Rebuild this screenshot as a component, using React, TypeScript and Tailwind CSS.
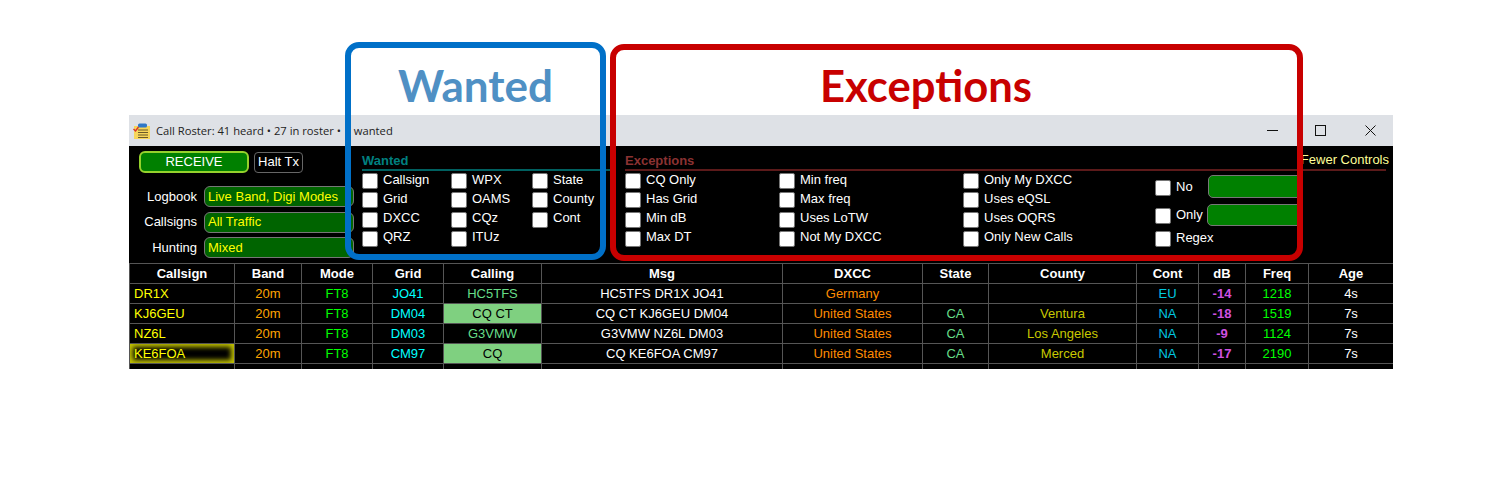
import React from 'react';

const wantedCols = [
  ['Callsign', 'Grid', 'DXCC', 'QRZ'],
  ['WPX', 'OAMS', 'CQz', 'ITUz'],
  ['State', 'County', 'Cont'],
];

const exceptionCols = [
  ['CQ Only', 'Has Grid', 'Min dB', 'Max DT'],
  ['Min freq', 'Max freq', 'Uses LoTW', 'Not My DXCC'],
  ['Only My DXCC', 'Uses eQSL', 'Uses OQRS', 'Only New Calls'],
];

const columns = [
  { name: 'Callsign', width: 105 },
  { name: 'Band', width: 67 },
  { name: 'Mode', width: 71 },
  { name: 'Grid', width: 71 },
  { name: 'Calling', width: 98 },
  { name: 'Msg', width: 241 },
  { name: 'DXCC', width: 140 },
  { name: 'State', width: 66 },
  { name: 'County', width: 148 },
  { name: 'Cont', width: 62 },
  { name: 'dB', width: 47 },
  { name: 'Freq', width: 63 },
  { name: 'Age', width: 85 },
];

const rows = [
  { call: 'DR1X', grid: 'JO41', calling: 'HC5TFS', msg: 'HC5TFS DR1X JO41', dxcc: 'Germany', state: '', county: '', cont: 'EU', db: '-14', freq: '1218', age: '4s' },
  { call: 'KJ6GEU', grid: 'DM04', calling: 'CQ CT', msg: 'CQ CT KJ6GEU DM04', dxcc: 'United States', state: 'CA', county: 'Ventura', cont: 'NA', db: '-18', freq: '1519', age: '7s', hit: true },
  { call: 'NZ6L', grid: 'DM03', calling: 'G3VMW', msg: 'G3VMW NZ6L DM03', dxcc: 'United States', state: 'CA', county: 'Los Angeles', cont: 'NA', db: '-9', freq: '1124', age: '7s' },
  { call: 'KE6FOA', grid: 'CM97', calling: 'CQ', msg: 'CQ KE6FOA CM97', dxcc: 'United States', state: 'CA', county: 'Merced', cont: 'NA', db: '-17', freq: '2190', age: '7s', hit: true, glow: true },
  { call: 'W0SS', grid: 'EM29', calling: 'OE1FJV', msg: 'OE1FJV W0SS EM29', dxcc: 'United States', state: 'KS', county: 'Idaho', cont: 'NA', db: '-11', freq: '757', age: '7s' },
];

// labels sit a little above the box centre, more so in the lower rows
const labelLift = ['mb-[2px]', 'mb-[2px]', 'mb-[4px]', 'mb-[4px]'];

const Check: React.FC<{ label: string; row?: number }> = ({ label, row = 0 }) => (
  <div className="flex items-center h-[16px]">
    <span className="w-[16px] h-[16px] bg-white border border-[#767676] rounded-[2px] shrink-0" />
    <span className={`ml-[5px] text-white whitespace-nowrap ${labelLift[row]}`}>{label}</span>
  </div>
);

const CheckCol: React.FC<{ items: string[]; width: number }> = ({ items, width }) => (
  <div className="grid grid-rows-[16px_16px_16px_16px] gap-y-[3.3px] shrink-0" style={{ width }}>
    {items.map((item, i) => (
      <Check key={item} label={item} row={i} />
    ))}
  </div>
);

const Select: React.FC<{ label: string; value: string }> = ({ label, value }) => (
  <div className="flex items-center h-[21px]">
    <span className="w-[58px] text-right text-white">{label}</span>
    <div className="ml-[7px] w-[150px] h-[21px] flex items-center pl-[3px] bg-[#006400] border border-[#777] rounded-[6px] text-[#ffff00] whitespace-nowrap">
      {value}
    </div>
  </div>
);

const RosterIcon = () => (
  <svg width="17" height="16" viewBox="0 0 17 16" className="shrink-0">
    <rect x="1" y="3" width="16" height="13" fill="#f7d65a" />
    <rect x="5" y="0.5" width="9" height="4" rx="1.5" fill="#2f78c8" />
    <path d="M5 7h10M5 9.5h10M5 12h10M5 14.5h10" stroke="#6b5a2a" strokeWidth="1.2" />
    <path d="M0.5 6l2 2 3-4" stroke="#d8342a" strokeWidth="1.4" fill="none" />
  </svg>
);

const App: React.FC = () => {
  return (
    <div className="relative w-[1500px] h-[500px] bg-white pt-[115px] overflow-hidden font-['Liberation_Sans',Arial,sans-serif] text-[13px] leading-[16px]">
      <div className="ml-[129px] w-[1264px] h-[254px] bg-black overflow-hidden">
        <div className="h-[31px] bg-[#dee1e6] flex items-center pl-[4px] font-['Open_Sans',sans-serif] text-[11.2px] text-[#222]">
          <RosterIcon />
          <span className="ml-[6px] whitespace-nowrap">Call Roster: 41 heard • 27 in roster •</span>
          <span className="ml-[13px]">wanted</span>
          <div className="ml-auto flex items-start gap-[36px] h-full pt-[10px] pr-[16px]">
            <svg width="12" height="12" viewBox="0 0 12 12">
              <path d="M0 5.5h11" stroke="#111" strokeWidth="1" />
            </svg>
            <svg width="12" height="12" viewBox="0 0 12 12">
              <rect x="0.5" y="0.5" width="10" height="10" fill="none" stroke="#111" strokeWidth="1" />
            </svg>
            <svg width="12" height="12" viewBox="0 0 12 12" className="ml-[2px]">
              <path d="M0.5 0.5l10 10M10.5 0.5l-10 10" stroke="#111" strokeWidth="1" />
            </svg>
          </div>
        </div>

        <div className="flex h-[117px]">
          <div className="w-[233px] shrink-0 pl-[10px] pt-[5px]">
            <div className="flex items-center gap-[5px]">
              <div className="w-[110px] h-[22px] flex items-center justify-center bg-[#008000] border-2 border-[#94d12c] rounded-[6px] text-white">
                RECEIVE
              </div>
              <div className="w-[49px] h-[21px] flex items-center justify-center bg-black border border-[#666] rounded-[4px] text-white">
                Halt Tx
              </div>
            </div>
            <div className="mt-[13px] flex flex-col gap-[4.5px]">
              <Select label="Logbook" value="Live Band, Digi Modes" />
              <Select label="Callsigns" value="All Traffic" />
              <Select label="Hunting" value="Mixed" />
            </div>
          </div>

          <div className="w-[248px] shrink-0 pt-[7px]">
            <div className="h-[18px] border-b-2 border-[#006060] font-bold text-[#008080]">Wanted</div>
            <div className="flex pt-[2px]">
              <CheckCol items={wantedCols[0]} width={89} />
              <CheckCol items={wantedCols[1]} width={81} />
              <CheckCol items={wantedCols[2]} width={78} />
            </div>
          </div>

          <div className="ml-[15px] w-[761px] shrink-0 relative pt-[7px]">
            <div className="h-[18px] border-b-2 border-[#5c1a1a] font-bold text-[#8b3232]">Exceptions</div>
            <div className="flex pt-[2px]">
              <CheckCol items={exceptionCols[0]} width={154} />
              <CheckCol items={exceptionCols[1]} width={184} />
              <CheckCol items={exceptionCols[2]} width={192} />
              <div className="w-[160px] shrink-0 flex flex-col pt-[2px]">
                <div className="flex items-start">
                  <div className="w-[53px] mt-[5px]"><Check label="No" /></div>
                  <div className="w-[95px] h-[23px] bg-[#008000] border border-[#777] rounded-[5px]" />
                </div>
                <div className="flex items-start mt-[6px]">
                  <div className="w-[52px] mt-[4px]"><Check label="Only" /></div>
                  <div className="w-[96px] h-[22px] bg-[#008000] border border-[#777] rounded-[5px]" />
                </div>
                <div className="mt-[5px]"><Check label="Regex" /></div>
              </div>
            </div>
            <span className="absolute right-[-3px] top-[6px] text-[#ffff99] whitespace-nowrap">Fewer Controls</span>
          </div>
        </div>

        <table className="table-fixed border-collapse w-[1264px] text-center leading-[15px]">
          <colgroup>
            {columns.map((c) => (
              <col key={c.name} style={{ width: c.width }} />
            ))}
          </colgroup>
          <thead>
            <tr className="h-[20px]">
              {columns.map((c) => (
                <th key={c.name} className="border border-[#555] p-0 font-bold text-white">{c.name}</th>
              ))}
            </tr>
          </thead>
          <tbody>
            {rows.map((r) => (
              <tr key={r.call} className="h-[20px]">
                <td className={`border border-[#555] p-0 pl-[4px] text-left text-[#ffff00] ${r.glow ? 'shadow-[inset_0_0_5px_3px_#c4c400]' : ''}`}>{r.call}</td>
                <td className="border border-[#555] p-0 text-[#ffa500]">20m</td>
                <td className="border border-[#555] p-0 text-[#00ff00]">FT8</td>
                <td className="border border-[#555] p-0 text-[#00ffff]">{r.grid}</td>
                <td className={`border border-[#555] p-0 ${r.hit ? 'bg-[#7fd080] text-black' : 'text-[#66dd88]'}`}>{r.calling}</td>
                <td className="border border-[#555] p-0 text-white">{r.msg}</td>
                <td className="border border-[#555] p-0 text-[#ff8c00]">{r.dxcc}</td>
                <td className="border border-[#555] p-0 text-[#66dd88]">{r.state}</td>
                <td className="border border-[#555] p-0 text-[#c8c800]">{r.county}</td>
                <td className="border border-[#555] p-0 text-[#00c8e0]">{r.cont}</td>
                <td className="border border-[#555] p-0 font-bold text-[#d050e0]">{r.db}</td>
                <td className="border border-[#555] p-0 text-[#00ff00]">{r.freq}</td>
                <td className="border border-[#555] p-0 text-white">{r.age}</td>
              </tr>
            ))}
          </tbody>
        </table>
      </div>

      {/* annotation frames drawn over the screenshot */}
      <div className="absolute left-[345px] top-[42px] w-[261px] h-[218px] border-[6px] border-[#0070c8] rounded-[14px] flex justify-center">
        <span className="mt-[11px] h-[52px] font-['Lato',sans-serif] font-bold text-[44px] leading-[52px] text-[#4f90c4]">Wanted</span>
      </div>
      <div className="absolute left-[610px] top-[44px] w-[693px] h-[217px] border-[6px] border-[#c80000] rounded-[14px]">
        <span className="absolute left-[204px] top-[9px] h-[52px] font-['Lato',sans-serif] font-bold text-[43.6px] leading-[52px] text-[#c80000]">Exceptions</span>
      </div>
    </div>
  );
};

export default App;
